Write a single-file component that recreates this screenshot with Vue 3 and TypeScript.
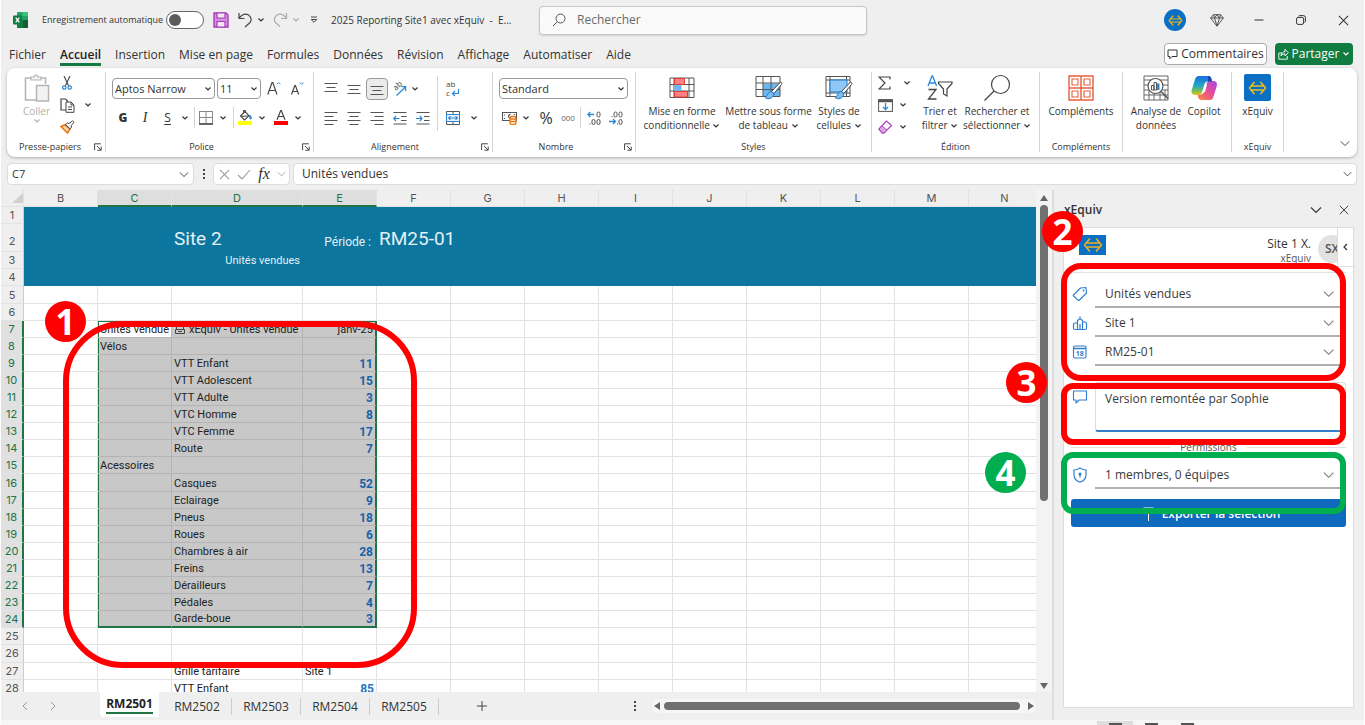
<script setup lang="ts">
import { ref } from 'vue'

interface SheetRow {
  n: number
  c?: string
  d?: string
  e?: string
  f?: string
}

const tabs = ['Fichier', 'Accueil', 'Insertion', 'Mise en page', 'Formules', 'Données', 'Révision', 'Affichage', 'Automatiser', 'Aide']
const columns = ['B', 'C', 'D', 'E', 'F', 'G', 'H', 'I', 'J', 'K', 'L', 'M', 'N']
const trailing = ['G', 'H', 'I', 'J', 'K', 'L', 'M', 'N']
const sheets = ['RM2501', 'RM2502', 'RM2503', 'RM2504', 'RM2505']

const rows: SheetRow[] = [
  { n: 1 },
  { n: 2, d: 'Site 2', e: 'Période :', f: 'RM25-01' },
  { n: 3, d: 'Unités vendues' },
  { n: 4 },
  { n: 5 },
  { n: 6 },
  { n: 7, c: 'Unités vendue', d: 'xEquiv - Unités vendue', e: 'janv-25' },
  { n: 8, c: 'Vélos' },
  { n: 9, d: 'VTT Enfant', e: '11' },
  { n: 10, d: 'VTT Adolescent', e: '15' },
  { n: 11, d: 'VTT Adulte', e: '3' },
  { n: 12, d: 'VTC Homme', e: '8' },
  { n: 13, d: 'VTC Femme', e: '17' },
  { n: 14, d: 'Route', e: '7' },
  { n: 15, c: 'Acessoires' },
  { n: 16, d: 'Casques', e: '52' },
  { n: 17, d: 'Eclairage', e: '9' },
  { n: 18, d: 'Pneus', e: '18' },
  { n: 19, d: 'Roues', e: '6' },
  { n: 20, d: 'Chambres à air', e: '28' },
  { n: 21, d: 'Freins', e: '13' },
  { n: 22, d: 'Dérailleurs', e: '7' },
  { n: 23, d: 'Pédales', e: '4' },
  { n: 24, d: 'Garde-boue', e: '3' },
  { n: 25 },
  { n: 26 },
  { n: 27, d: 'Grille tarifaire', e: 'Site 1' },
  { n: 28, d: 'VTT Enfant', e: '85' },
]

const isSelected = (n: number): boolean => n >= 7 && n <= 24
const rowClass = (n: number) => ({
  band: n <= 4,
  'band-title': n === 2,
  'band-sub': n === 3,
  sel: isSelected(n),
  first: n === 7,
  last: n === 24,
})
const isNumber = (v?: string): boolean => !!v && /^\d+$/.test(v)

const activeTab = ref('Accueil')
const activeSheet = ref('RM2501')
const comment = ref('Version remontée par Sophie')
const autosave = ref(false)
</script>

<template>
  <div class="app">
    <svg class="defs" aria-hidden="true">
      <symbol id="chev" viewBox="0 0 8 6"><path d="M1.500 1.500 4 4l2.500-2.500" fill="none" stroke="currentColor" stroke-width="1.200" /></symbol>
      <symbol id="chev-lg" viewBox="0 0 12 8"><path d="M1 1.500 6 6.500l5-5" fill="none" stroke="currentColor" stroke-width="1.100" /></symbol>
      <symbol id="launch" viewBox="0 0 8 8"><path d="M.6 7V.8h6.200M3 3l4 4M7.200 3.600v3.600H3.400" fill="none" stroke="#444" stroke-width="1" /></symbol>
      <symbol id="cross" viewBox="0 0 12 12"><path d="m1 1 10 10M11 1 1 11" fill="none" stroke="currentColor" stroke-width="1.100" /></symbol>
      <symbol id="arrows" viewBox="0 0 20 14"><path d="M6.500 1 1.500 7l5 6M13.500 1l5 6-5 6M3.500 5h13M3.500 9h13" fill="none" stroke="currentColor" stroke-width="1.600" stroke-linejoin="round" stroke-linecap="round" /></symbol>
    </svg>

    <header class="titlebar">
      <div class="title-left">
        <svg class="excel" width="15" height="16" viewBox="0 0 15 16">
          <rect x="4" y="0" width="11" height="16" rx="1" fill="#21a366" />
          <path d="M9.500 0H14a1 1 0 0 1 1 1v3H9.500z" fill="#33c481" /><path d="M9.500 8H15v7a1 1 0 0 1-1 1H9.500z" fill="#185c37" /><path d="M4 8h5.500v8H5a1 1 0 0 1-1-1z" fill="#107c41" />
          <rect x="0" y="3.500" width="9" height="9" rx="1" fill="#107c41" /><path d="m2.700 5.700 3.600 4.600M6.300 5.700l-3.600 4.600" stroke="#fff" stroke-width="1.300" />
        </svg>
        <label class="auto" for="autosave">Enregistrement automatique</label>
        <input id="autosave" v-model="autosave" class="switch" type="checkbox" role="switch" />
        <button class="ic save" aria-label="Enregistrer">
          <svg width="16" height="16" viewBox="0 0 16 16"><path d="M1 1h12l2 2v12H1z" fill="#d58fe0" stroke="#a83dba" stroke-width="1.400" /><path d="M4 1h8v5H4zM4 9.500h8V15H4z" fill="#f6e6f8" stroke="#a83dba" stroke-width="1.200" /></svg>
        </button>
        <button class="ic undo" aria-label="Annuler">
          <svg width="15" height="16" viewBox="0 0 15 16"><path d="M1 1v5.500h5.500M1 6.500C3.500 3 7 1 10.500 3c3 2 3.500 5.500 1 8L7 15" fill="none" stroke="#444" stroke-width="1.200" /></svg>
          <svg class="chev"><use href="#chev" /></svg>
        </button>
        <button class="ic redo" aria-label="Rétablir">
          <svg width="15" height="16" viewBox="0 0 15 16"><path d="M13.500 1v5.500H8M13.500 6.500C11 3 7.500 1 4 3c-3 2-3.500 5.500-1 8l4 3.500" fill="none" stroke="#aaa" stroke-width="1.200" /></svg>
          <svg class="chev"><use href="#chev" /></svg>
        </button>
        <button class="ic custom" aria-label="Personnaliser la barre">
          <svg width="8" height="8" viewBox="0 0 8 8"><path d="M1 1h6M1.200 3.500h5.600L4 6.300z" fill="none" stroke="#444" stroke-width="1" /></svg>
        </button>
        <span class="doc">2025 Reporting Site1 avec xEquiv&nbsp; -&nbsp; E...</span>
      </div>
      <label class="search">
        <svg width="14" height="14" viewBox="0 0 14 14"><circle cx="8.500" cy="5.500" r="4.500" fill="none" stroke="#555" /><path d="M5.200 8.800 1 13" stroke="#555" /></svg>
        <input type="text" placeholder="Rechercher" aria-label="Rechercher" />
      </label>
      <div class="window">
        <button class="avatar" aria-label="Compte"><svg width="15" height="11"><use href="#arrows" /></svg></button>
        <button class="ic" aria-label="Premium"><svg width="14" height="13" viewBox="0 0 14 13"><path d="M3.500.7h7L13.400 4 7 12.200.6 4zM.6 4h12.800M4.500 4 7 12l2.500-8M3.500.7 4.500 4 7 .7 9.500 4l1-3.300" fill="none" stroke="#444" stroke-width=".9" stroke-linejoin="round" /></svg></button>
        <button class="ic" aria-label="Réduire"><svg width="10" height="10" viewBox="0 0 10 10"><path d="M.5 5h9" stroke="#333" /></svg></button>
        <button class="ic" aria-label="Restaurer"><svg width="10" height="10" viewBox="0 0 10 10"><rect x=".6" y="2.400" width="7" height="7" rx="1.500" fill="none" stroke="#333" /><path d="M2.500 1.200C3 .6 3.500.6 4 .6h3.400a2 2 0 0 1 2 2V6c0 .6 0 1-.7 1.500" fill="none" stroke="#333" /></svg></button>
        <button class="ic" aria-label="Fermer"><svg width="11" height="11"><use href="#cross" /></svg></button>
      </div>
    </header>

    <div class="tabbar">
      <nav class="tabs">
        <button v-for="t in tabs" :key="t" class="tab" :class="{ on: t === activeTab }" @click="activeTab = t">{{ t }}</button>
      </nav>
      <button class="comments">
        <svg width="11" height="11" viewBox="0 0 11 11"><path d="M1 1h9v6.500H5L2.800 9.800V7.500H1z" fill="none" stroke="#333" /></svg>Commentaires
      </button>
      <button class="share">
        <svg width="11" height="12" viewBox="0 0 11 12"><path d="M4 5H.8v6.200h8.500V8M3 8c.3-3 2-4.300 4-4.300V1.300l3.300 3.400L7 8V5.800C5.500 5.800 4.200 6.300 3 8z" fill="none" stroke="#fff" stroke-width=".9" /></svg>Partager
        <svg class="chev"><use href="#chev" /></svg>
      </button>
    </div>

    <section class="ribbon">
      <div class="group clip">
        <div class="body">
          <button class="big paste" disabled>
            <svg width="26" height="28" viewBox="0 0 26 28"><path d="M7 4H1.500v22H12M17 4h4.500v6" fill="none" stroke="#b5b5b5" stroke-width="1.600" /><path d="M7 6V3h3c0-2.500 4-2.500 4 0h3v3z" fill="#f3f3f3" stroke="#b5b5b5" stroke-width="1.200" /><rect x="12.500" y="11.500" width="12" height="15.500" fill="#f3f3f3" stroke="#b5b5b5" stroke-width="1.500" /></svg>
            <span>Coller</span><svg class="chev"><use href="#chev" /></svg>
          </button>
          <div class="stack">
            <button aria-label="Couper"><svg width="10" height="14" viewBox="0 0 10 14"><path d="m2 0 4.700 10M8 0 3.300 10" stroke="#444" stroke-width="1.100" /><circle cx="2.300" cy="11.500" r="1.700" fill="none" stroke="#2b88d8" stroke-width="1.200" /><circle cx="7.700" cy="11.500" r="1.700" fill="none" stroke="#2b88d8" stroke-width="1.200" /></svg></button>
            <button aria-label="Copier"><svg width="15" height="15" viewBox="0 0 15 15"><path d="M6 12H1V1h4.500L8 3.500" fill="none" stroke="#444" stroke-width="1.200" /><path d="M6 4h5l3 3v7.300H6zM11 4v3h3M8 9h4M8 11.500h4" fill="#fff" stroke="#444" /></svg></button>
            <button aria-label="Reproduire la mise en forme"><svg width="15" height="14" viewBox="0 0 15 14"><path d="M1 6.500 7.500 13l2.500-4L5 4.800z" fill="#fbd9b4" stroke="#e8760c" stroke-width="1.600" /><path d="m5.500 4.500 4.500 4.300 1.700-1.800-.7-1.200 3-3.500-1.500-1.400-3.700 2.700L7.500 3z" fill="#fff" stroke="#444" /></svg></button>
            <svg class="chev"><use href="#chev" /></svg>
          </div>
        </div>
        <footer>Presse-papiers<svg class="launch"><use href="#launch" /></svg></footer>
      </div>

      <div class="group font">
        <div class="body col">
          <div class="line">
            <label class="combo family"><select aria-label="Police"><option>Aptos Narrow</option></select><svg class="chev"><use href="#chev" /></svg></label>
            <label class="combo size"><select aria-label="Taille"><option>11</option></select><svg class="chev"><use href="#chev" /></svg></label>
            <button class="grow" aria-label="Agrandir"><svg width="14" height="15" viewBox="0 0 14 15"><path d="m.8 13.500 4.200-12h.8l4.200 12M2.200 9.500h6.400" fill="none" stroke="#444" stroke-width="1.200" /><path d="m9.800 3.300 1.800-1.800 1.800 1.800" fill="none" stroke="#2b88d8" /></svg></button>
            <button class="grow" aria-label="Réduire la taille"><svg width="14" height="15" viewBox="0 0 14 15"><path d="m1.500 13.500 3.300-9h.6l3.300 9M2.600 10.500h5" fill="none" stroke="#444" stroke-width="1.200" /><path d="m9.800 1.500 1.800 1.800 1.800-1.800" fill="none" stroke="#2b88d8" /></svg></button>
          </div>
          <div class="line font-row">
            <button class="bold">G</button><button class="ital">I</button><button class="under">S</button>
            <svg class="chev"><use href="#chev" /></svg><i class="vr" />
            <button aria-label="Bordures"><svg width="14" height="14" viewBox="0 0 14 14"><path d="M.5 0v12M13.500 0v12M7 0v12M0 .5h14M0 6.500h14" fill="none" stroke="#888" /><path d="M0 13h14" stroke="#333" stroke-width="1.500" /></svg></button>
            <svg class="chev"><use href="#chev" /></svg><i class="vr" />
            <button aria-label="Remplissage"><svg width="14" height="15" viewBox="0 0 14 15"><rect y="11" width="14" height="4" fill="#ffff00" /><path d="m2.500 6 4.500-4.500 4 4.300L6.500 10z" fill="#fff" stroke="#444" stroke-width="1.100" /><path d="m3 6.300 7.500-.3M5.500 3V.5h2V3" fill="none" stroke="#444" /><path d="M12 5c2 3 1.500 4 .5 4s-1-2-.5-4z" fill="#2b88d8" stroke="#2b88d8" /></svg></button>
            <svg class="chev"><use href="#chev" /></svg>
            <button aria-label="Couleur de police"><svg width="14" height="15" viewBox="0 0 14 15"><rect y="11" width="14" height="4" fill="#ff0000" /><path d="M3 9.700 6.700.6h.6L11 9.700M4.300 6.500h5.400" fill="none" stroke="#444" stroke-width="1.200" /></svg></button>
            <svg class="chev"><use href="#chev" /></svg>
          </div>
        </div>
        <footer>Police<svg class="launch"><use href="#launch" /></svg></footer>
      </div>

      <div class="group align">
        <div class="body align-grid">
          <button aria-label="Haut"><svg width="14" height="14" viewBox="0 0 14 14"><path d="M.5 1.500h13M2.500 5.500h9M.5 9.500h13" stroke="#555" stroke-width="1.100" /></svg></button>
          <button aria-label="Milieu"><svg width="14" height="14" viewBox="0 0 14 14"><path d="M.5 3.500h13M2.500 7.500h9M.5 11.500h13" stroke="#555" stroke-width="1.100" /></svg></button>
          <button class="pressed" aria-label="Bas"><svg width="14" height="14" viewBox="0 0 14 14"><path d="M.5 4.500h13M2.500 8.500h9M.5 12.500h13" stroke="#555" stroke-width="1.100" /></svg></button>
          <button aria-label="Orientation"><svg class="loose" width="15" height="14" viewBox="0 0 15 14"><text x="0" y="0" transform="translate(4 9) rotate(-45)" font-size="8" font-family="Open Sans, sans-serif" fill="#444">ab</text><path d="M4.500 13.500 13.500 5M9.500 4.700h4.200v4.200" fill="none" stroke="#2b88d8" stroke-width="1.200" /></svg></button>
          <svg class="chev start"><use href="#chev" /></svg>
          <i class="vr tall" />
          <button aria-label="Renvoyer à la ligne"><svg class="loose" width="14" height="18" viewBox="0 0 14 18"><text x="0" y="7" font-size="8" font-family="Open Sans, sans-serif" fill="#444">ab</text><text x="0" y="16" font-size="8" font-family="Open Sans, sans-serif" fill="#444">c</text><path d="M12.500 9v4.500H6.500M9 11l-2.500 2.500L9 16" fill="none" stroke="#2b88d8" stroke-width="1.200" /></svg></button>
          <span />
          <button aria-label="Gauche"><svg width="14" height="14" viewBox="0 0 14 14"><path d="M.5 1.500h13M.5 5.500h9M.5 9.500h13M.5 13.500h9" stroke="#555" stroke-width="1.100" /></svg></button>
          <button aria-label="Centre"><svg width="14" height="14" viewBox="0 0 14 14"><path d="M.5 1.500h13M2.500 5.500h9M.5 9.500h13M2.500 13.500h9" stroke="#555" stroke-width="1.100" /></svg></button>
          <button aria-label="Droite"><svg width="14" height="14" viewBox="0 0 14 14"><path d="M.5 1.500h13M4.500 5.500h9M.5 9.500h13M4.500 13.500h9" stroke="#555" stroke-width="1.100" /></svg></button>
          <button aria-label="Diminuer le retrait"><svg width="14" height="14" viewBox="0 0 14 14"><path d="M.5 1.500h13M8 5.500h5.500M8 9.500h5.500M.5 13h13" stroke="#555" stroke-width="1.100" /><path d="M6.500 7.500h-6M3 5 .8 7.500 3 10" fill="none" stroke="#2b88d8" stroke-width="1.200" /></svg></button>
          <button aria-label="Augmenter le retrait"><svg width="14" height="14" viewBox="0 0 14 14"><path d="M.5 1.500h13M8 5.500h5.500M8 9.500h5.500M.5 13h13" stroke="#555" stroke-width="1.100" /><path d="M0 7.500h6M3.800 5 6 7.500 3.800 10" fill="none" stroke="#2b88d8" stroke-width="1.200" /></svg></button>
          <button aria-label="Fusionner"><svg width="14" height="14" viewBox="0 0 14 14"><path d="M.5.5h13v13H.5zM7 .5v3M7 10.500v3" fill="#fff" stroke="#555" /><rect x=".5" y="3.500" width="13" height="7" fill="#e8f3fc" stroke="#2b88d8" /><path d="M2.500 7h9M4.500 5.200 2.600 7l1.900 1.800M9.500 5.200 11.400 7 9.500 8.800" fill="none" stroke="#2b88d8" stroke-width="1.100" /></svg></button>
          <svg class="chev"><use href="#chev" /></svg>
        </div>
        <footer>Alignement<svg class="launch"><use href="#launch" /></svg></footer>
      </div>

      <div class="group number">
        <div class="body col">
          <div class="line"><label class="combo format"><select aria-label="Format"><option>Standard</option></select><svg class="chev"><use href="#chev" /></svg></label></div>
          <div class="line number-row">
            <button aria-label="Comptabilité"><svg width="15" height="14" viewBox="0 0 15 14"><rect x=".5" y="1.500" width="14" height="8" fill="#fff" stroke="#555" /><path d="M2.500 3.500v1M2.500 7v1M12.500 3v1M8.500 3.500c-2.500-.5-2.500 4 0 3.500" fill="none" stroke="#555" stroke-width="1.200" /><rect x="8" y="5.500" width="6" height="8" rx="2" fill="#fff" stroke="#e8760c" stroke-width="1.300" /><path d="M8 8h6M8 10.500h6" stroke="#e8760c" stroke-width="1.300" /></svg></button>
            <svg class="chev"><use href="#chev" /></svg>
            <button class="pct">%</button><button class="zeros">000</button><i class="vr" />
            <button class="dec" aria-label="Ajouter une décimale"><svg width="14" height="14" viewBox="0 0 14 14"><path d="M7 3.500H.8M3.300 1 .8 3.500 3.300 6" fill="none" stroke="#2b88d8" stroke-width="1.300" /><rect x="10" y="1" width="3" height="5" rx="1.500" fill="none" stroke="#555" /><rect x="5" y="8.500" width="3" height="5" rx="1.500" fill="none" stroke="#555" /><rect x="10" y="8.500" width="3" height="5" rx="1.500" fill="none" stroke="#555" /><path d="M2.500 13h1" stroke="#555" /></svg></button>
            <button class="dec" aria-label="Réduire les décimales"><svg width="14" height="14" viewBox="0 0 14 14"><path d="M0 10.500h6.500M4 8l2.500 2.500L4 13" fill="none" stroke="#2b88d8" stroke-width="1.300" /><rect x="5" y="1" width="3" height="5" rx="1.500" fill="none" stroke="#555" /><rect x="10" y="1" width="3" height="5" rx="1.500" fill="none" stroke="#555" /><rect x="10" y="8.500" width="3" height="5" rx="1.500" fill="none" stroke="#555" /><path d="M2.500 5.500h1M8 13h1" stroke="#555" /></svg></button>
          </div>
        </div>
        <footer>Nombre<svg class="launch"><use href="#launch" /></svg></footer>
      </div>

      <div class="group styles">
        <div class="body">
          <button class="big w84">
            <svg width="26" height="22" viewBox="0 0 26 22"><path d="M1 1h24v19.500H1zM1 7.500h24M1 14h24M5 1v19.500M20 1v19.500" fill="#fff" stroke="#555" /><path d="M5.500 1.500h10v6h-10zM5.500 14.500h13v5.500h-13z" fill="#ff8080" stroke="#e03c3c" /><path d="M5.500 8h7v6h-7z" fill="#6ab7f2" /></svg>
            <span>Mise en forme<br />conditionnelle <svg class="chev"><use href="#chev" /></svg></span>
          </button>
          <button class="big w89">
            <svg width="28" height="25" viewBox="0 0 28 25"><rect x="8" y="8" width="17" height="13" fill="#6ab7f2" /><path d="M1 1h24v20H1zM1 7.500h24M1 14h24M8 1v20M16 1v20" fill="none" stroke="#555" /><path d="M25.500 6.500c1.500.5 1.500 1.500 1 2.500L19 18l-2.500-2z" fill="#fff" stroke="#444" /><path d="M16 16c-3 0-3 4-6 6 3 2.500 8 1 9-3.500z" fill="#79bdf3" stroke="#1e78c8" /></svg>
            <span>Mettre sous forme<br />de tableau <svg class="chev"><use href="#chev" /></svg></span>
          </button>
          <button class="big w52">
            <svg width="28" height="25" viewBox="0 0 28 25"><path d="M1 1h24v20H1zM1 4.500h24M1 17.500h24M5 1v20M21.500 1v20" fill="none" stroke="#555" /><rect x="5" y="4.500" width="17" height="12" fill="#8fc8f7" stroke="#1e78c8" /><path d="M25.500 6.500c1.500.5 1.500 1.500 1 2.500L19 18l-2.500-2z" fill="#fff" stroke="#444" /><path d="M16 16c-3 0-3 4-6 6 3 2.500 8 1 9-3.500z" fill="#79bdf3" stroke="#1e78c8" /></svg>
            <span>Styles de<br />cellules <svg class="chev"><use href="#chev" /></svg></span>
          </button>
        </div>
        <footer>Styles</footer>
      </div>

      <div class="group edit">
        <div class="body">
          <div class="edit-col">
            <button class="wide" aria-label="Somme"><svg width="13" height="14" viewBox="0 0 13 14"><path d="M12 3.500V1H1l6 6-6 6h11v-2.500" fill="none" stroke="#444" stroke-width="1.200" /></svg><svg class="chev"><use href="#chev" /></svg></button>
            <button aria-label="Recopier"><svg width="15" height="13" viewBox="0 0 15 13"><rect x=".6" y=".6" width="13.800" height="11.800" fill="#fff" stroke="#555" /><path d="M.5 2h14" stroke="#555" stroke-width="2.500" /><path d="M7.500 4v6.500M5 8l2.500 2.500L10 8" fill="none" stroke="#2b88d8" stroke-width="1.300" /></svg><svg class="chev"><use href="#chev" /></svg></button>
            <button aria-label="Effacer"><svg width="15" height="14" viewBox="0 0 15 14"><path d="m1 9 7.500-8 5 4.500L6 13H4z" fill="#fff" stroke="#a83dba" stroke-width="1.200" /><path d="m1 9 3-3.300 5 4.600L6 13H4z" fill="#d9a6e2" stroke="#a83dba" /></svg><svg class="chev"><use href="#chev" /></svg></button>
          </div>
          <button class="big w40">
            <svg width="26" height="26" viewBox="0 0 26 26"><path d="m1 11 4-10h.6l4 10M2.300 8h6" fill="none" stroke="#2b88d8" stroke-width="1.300" /><path d="M1.500 14.500H9L1.500 24h8" fill="none" stroke="#444" stroke-width="1.300" /><path d="M11.500 7h13.500v1.500l-5 5.500v7l-3.500-2v-5l-5-5.500z" fill="none" stroke="#444" stroke-width="1.200" /></svg>
            <span>Trier et<br />filtrer <svg class="chev"><use href="#chev" /></svg></span>
          </button>
          <button class="big w74">
            <svg width="28" height="28" viewBox="0 0 28 28"><circle cx="17.500" cy="10.500" r="9" fill="none" stroke="#444" stroke-width="1.200" /><path d="M11 17 1.500 26.500" stroke="#444" stroke-width="1.300" /></svg>
            <span>Rechercher et<br />sélectionner <svg class="chev"><use href="#chev" /></svg></span>
          </button>
        </div>
        <footer>Édition</footer>
      </div>

      <div class="group addins">
        <div class="body">
          <button class="big">
            <svg width="26" height="26" viewBox="0 0 26 26"><path d="M1 1h24v24H1zM1 13h24M13 1v24" fill="none" stroke="#e2613c" stroke-width="1.400" /><path d="M4 4h6v6H4zM16 4h6v6h-6zM4 16h6v6H4zM16 16h6v6h-6z" fill="#fff" stroke="#e2613c" stroke-width="1.100" /></svg>
            <span>Compléments</span>
          </button>
        </div>
        <footer>Compléments</footer>
      </div>

      <div class="group analyse">
        <div class="body">
          <button class="big w54">
            <svg width="26" height="26" viewBox="0 0 26 26"><path d="M1 1h24v24H1zM1 5h24M1 10h24M1 15h24M1 20h24M6 15v10M11 15v10M17 15v10M22 15v10" fill="#fff" stroke="#666" /><circle cx="12.500" cy="11" r="7.500" fill="#fff" stroke="#555" stroke-width="1.200" /><path d="M8.500 10.500h2.500V15H8.500zM11 7.500h2.500V15H11z" fill="#fff" stroke="#555" /><path d="M14 8.500h2.500V15H14z" fill="#2b88d8" /><path d="m18 16.500 7 7" stroke="#555" stroke-width="1.600" /></svg>
            <span>Analyse de<br />données</span>
          </button>
          <button class="big w42">
            <svg width="27" height="26" viewBox="0 0 27 26">
              <defs>
                <linearGradient id="cpa" x1="0" y1="0" x2="0" y2="1"><stop offset="0" stop-color="#1b6fe0" /><stop offset=".5" stop-color="#21a5c9" /><stop offset=".8" stop-color="#7cc04b" /><stop offset="1" stop-color="#f2c51d" /></linearGradient>
                <linearGradient id="cpb" x1="1" y1="0" x2="0" y2="1"><stop offset="0" stop-color="#a24be8" /><stop offset=".5" stop-color="#ea4d94" /><stop offset="1" stop-color="#fb8d35" /></linearGradient>
              </defs>
              <path d="M8 1h9c2.500 0 3 1.500 3.500 3.500l.5 2h-4c-2 0-3 1-3.500 2.500L11 17c-.6 2-1.500 3-3.500 3H4c-3.500 0-4-3-3-6L4 4.500C4.700 2.200 5.500 1 8 1z" fill="url(#cpa)" />
              <path d="M19 25h-8.500c-2.500 0-3-1.500-3.500-3.500L6.500 19.500h3c2 0 3-1 3.500-2.500l2.500-8c.6-2 1.500-3 3.500-3h3.500c3.500 0 4 3 3 6l-3 9.500c-.7 2.300-1 3.500-3.500 3.500z" fill="url(#cpb)" />
              <path d="m14 9.500-2 7.500h2l2-7.500z" fill="#fff" /><path d="M17 1c2.500 0 3 1.500 3.500 3.500l.5 2h-4z" fill="#1b44b5" />
            </svg>
            <span>Copilot</span>
          </button>
        </div>
      </div>

      <div class="group xeq">
        <div class="body">
          <button class="big"><i class="brand"><svg width="19" height="14"><use href="#arrows" /></svg></i><span>xEquiv</span></button>
        </div>
        <footer>xEquiv</footer>
      </div>
      <button class="collapse" aria-label="Réduire le ruban"><svg width="10" height="7"><use href="#chev-lg" /></svg></button>
    </section>

    <div class="formula">
      <label class="namebox"><input type="text" value="C7" aria-label="Zone Nom" /><svg width="10" height="7"><use href="#chev-lg" /></svg></label>
      <i class="dots" />
      <div class="fx">
        <button class="dim" aria-label="Annuler la saisie"><svg width="11" height="11"><use href="#cross" /></svg></button>
        <button class="dim" aria-label="Valider"><svg width="14" height="11" viewBox="0 0 14 11"><path d="m1 6 4 4 8-9" fill="none" stroke="#999" stroke-width="1.100" /></svg></button>
        <button class="fxb">fx</button>
        <svg class="dim" width="9" height="6"><use href="#chev-lg" /></svg>
      </div>
      <label class="fbar"><input type="text" value="Unités vendues" aria-label="Barre de formule" /><svg width="9" height="6"><use href="#chev-lg" /></svg></label>
    </div>

    <main class="work">
      <section class="sheet">
        <div class="grid-wrap">
          <div class="grid">
            <table>
              <colgroup>
                <col class="cw-head" /><col v-for="c in columns" :key="c" :class="{ 'cw-d': c === 'D', 'cw-last': c === 'N', cw: c !== 'D' && c !== 'N' }" />
              </colgroup>
              <thead>
                <tr>
                  <th class="corner"><svg width="11" height="10" viewBox="0 0 11 10"><path d="M11 0v10H0z" fill="#d0d0d0" /></svg></th>
                  <th v-for="c in columns" :key="c" scope="col" :class="{ hot: 'CDE'.includes(c) }">{{ c }}</th>
                </tr>
              </thead>
              <tbody>
                <tr v-for="r in rows" :key="r.n" :class="rowClass(r.n)">
                  <th scope="row">{{ r.n }}</th>
                  <td />
                  <td class="c">{{ r.c }}</td>
                  <td class="d"><svg v-if="r.n === 7" class="db" width="10" height="9" viewBox="0 0 10 9"><path d="M1.500 4V.5h7V4M.5 4.500h9v4h-9zM3 6.500h4" fill="none" stroke="#444" /></svg>{{ r.d }}</td>
                  <td class="e" :class="{ num: isNumber(r.e), pale: r.n === 28, left: r.n === 27 }">{{ r.e }}</td>
                  <td>{{ r.f }}</td>
                  <td v-for="t in trailing" :key="t" />
                </tr>
              </tbody>
            </table>
          </div>
          <div class="vscroll"><i class="tri up" /><i class="thumb" /><i class="tri down" /></div>
        </div>
        <div class="sheetbar">
          <div class="arrows">
            <button aria-label="Feuille précédente"><svg width="6" height="10" viewBox="0 0 6 10"><path d="M5 1 1 5l4 4" fill="none" stroke="#999" /></svg></button>
            <button aria-label="Feuille suivante"><svg width="6" height="10" viewBox="0 0 6 10"><path d="m1 1 4 4-4 4" fill="none" stroke="#999" /></svg></button>
          </div>
          <button v-for="s in sheets" :key="s" class="stab" :class="{ on: s === activeSheet }" @click="activeSheet = s"><span>{{ s }}</span></button>
          <button class="plus" aria-label="Nouvelle feuille"><svg width="10" height="10" viewBox="0 0 10 10"><path d="M5 0v10M0 5h10" stroke="#444" /></svg></button>
          <i class="dots push" />
          <div class="hscroll"><i class="tri lf" /><i class="hthumb" /><i class="tri rt" /></div>
        </div>
        <i class="mark area" />
        <b class="badge b1">1</b>
      </section>

      <aside class="pane">
        <div class="pane-head">
          <h2>xEquiv</h2>
          <button aria-label="Options du volet"><svg width="12" height="8"><use href="#chev-lg" /></svg></button>
          <button aria-label="Fermer le volet"><svg width="10" height="10"><use href="#cross" /></svg></button>
        </div>
        <div class="card">
          <div class="who">
            <i class="logo"><svg width="20" height="14"><use href="#arrows" /></svg></i>
            <p>Site 1 X.<small>xEquiv</small></p>
            <span class="sx">SX</span>
            <button class="fold" aria-label="Replier"><svg width="5" height="8" viewBox="0 0 5 8"><path d="M4 1 1 4l3 3" fill="none" stroke="#333" stroke-width="1.200" /></svg></button>
          </div>
          <form class="form" @submit.prevent>
            <div class="field">
              <svg width="16" height="16" viewBox="0 0 16 16"><path d="m1.500 9 7-7 5.500-.5L14.500 7l-7 7c-.5.5-1 .5-1.500 0L1.500 10c-.4-.4-.4-.6 0-1z" fill="none" stroke="#2f7fcb" stroke-width="1.100" stroke-linejoin="round" /><circle cx="11.500" cy="4.500" r="1" fill="#2f7fcb" /></svg>
              <label><select aria-label="Table"><option>Unités vendues</option></select><svg width="12" height="8"><use href="#chev-lg" /></svg></label>
            </div>
            <div class="field">
              <svg width="16" height="16" viewBox="0 0 16 16"><path d="M5.500 14.500H3A1.500 1.500 0 0 1 1.500 13V9.500A1.500 1.500 0 0 1 3 8h2.500M5.500 14.500v-9L8 3.500l2.500 2v9zM10.500 14.500H13a1.500 1.500 0 0 0 1.500-1.500V8.500A1.500 1.500 0 0 0 13 7h-2.500M8 3.500V1.500M8 14.500V9" fill="none" stroke="#2f7fcb" stroke-width="1.200" /></svg>
              <label><select aria-label="Site"><option>Site 1</option></select><svg width="12" height="8"><use href="#chev-lg" /></svg></label>
            </div>
            <div class="field">
              <svg width="16" height="16" viewBox="0 0 16 16"><rect x="1.500" y="2" width="12.500" height="12" rx="1.500" fill="none" stroke="#2f7fcb" stroke-width="1.100" /><path d="M1.500 4.500H14" stroke="#2f7fcb" stroke-width="1.500" /><text x="7.800" y="12.200" text-anchor="middle" font-size="7" font-weight="700" font-family="Open Sans, sans-serif" fill="#2f7fcb">18</text></svg>
              <label><select aria-label="Période"><option>RM25-01</option></select><svg width="12" height="8"><use href="#chev-lg" /></svg></label>
            </div>
            <div class="field note">
              <svg width="16" height="16" viewBox="0 0 16 16"><path d="M1.500 2h13v9H7l-3 3v-3H1.500z" fill="none" stroke="#2f7fcb" stroke-width="1.100" stroke-linejoin="round" /></svg>
              <textarea v-model="comment" aria-label="Commentaire" />
            </div>
            <div class="perm"><span>Permissions</span></div>
            <div class="field">
              <svg width="16" height="16" viewBox="0 0 16 16"><path d="M8 1c2 1.500 4 2 6 2v5c0 3.500-2.500 6-6 7.300C4.500 14 2 11.500 2 8V3c2 0 4-.5 6-2z" fill="none" stroke="#2f7fcb" stroke-width="1.200" /><circle cx="8" cy="7" r="1.500" fill="#2f7fcb" /><path d="M8 7v3.500" stroke="#2f7fcb" stroke-width="1.200" /></svg>
              <label><select aria-label="Permissions"><option>1 membres, 0 équipes</option></select><svg width="12" height="8"><use href="#chev-lg" /></svg></label>
            </div>
            <button class="export" type="submit"><svg width="11" height="15" viewBox="0 0 11 15"><path d="M.5 1h10M5.500 1v13" fill="none" stroke="#fff" /></svg>Exporter la sélection</button>
          </form>
        </div>
        <i class="mark m2" /><i class="mark m3" /><i class="mark m4" />
        <b class="badge b2">2</b><b class="badge b3">3</b><b class="badge b4">4</b>
      </aside>
    </main>

    <footer class="status"><i class="view on" /><i class="view" /><i class="view" /></footer>
  </div>
</template>

<style>
html, body { background: #fff; overflow: hidden; }
</style>

<style scoped>
* { box-sizing: border-box; }
.app { height: 100vh; display: flex; flex-direction: column; background: #efefef; border: solid #fff; border-width: 0 1px; font: 12px/14px "Open Sans", "Noto Sans", sans-serif; color: #333; white-space: nowrap; overflow: hidden; }
.defs { display: none; }
.loose { overflow: visible; }
button, input, select, textarea { font: inherit; color: inherit; background: none; border: 0; padding: 0; margin: 0; outline: 0; }
button { display: inline-flex; align-items: center; justify-content: center; }
select { appearance: none; width: 100%; height: 100%; }
.chev { width: 8px; height: 6px; color: #333; flex: none; }

.titlebar { height: 40px; flex: none; display: flex; align-items: center; }
.title-left { width: 538px; flex: none; display: flex; align-items: center; font-size: 10px; }
.excel { margin: 0 14px 0 12px; }
.auto { width: 124px; font-size: 9px; }
.switch { appearance: none; width: 38px; height: 18px; border: 1px solid #666; border-radius: 9px; background: #fff; display: flex; align-items: center; margin-right: 9px; }
.switch::before { content: ""; width: 12px; height: 12px; margin-left: 2px; border-radius: 50%; background: #5c5c5c; }
.save { margin-right: 9px; }
.undo, .redo { gap: 4px; margin-right: 8px; }
.redo .chev { color: #aaa; }
.custom { margin: 0 13px 0 2px; }
.search { width: 328px; height: 29px; display: flex; align-items: center; gap: 11px; padding-left: 12px; background: #fafafa; border: 1px solid #c8c8c8; border-radius: 4px; box-shadow: 0 1px 2px #0002; font-size: 12px; }
.search input { flex: 1; }
.search input::placeholder { color: #6a6a6a; opacity: 1; }
.window { margin-left: auto; display: flex; align-items: center; }
.window button { width: 42px; height: 24px; }
.window .avatar { width: 22px; height: 22px; margin-right: 10px; border-radius: 50%; background: #0b6fc4; color: #e8b923; }

.tabbar { height: 28px; flex: none; display: flex; align-items: center; padding: 0 11px 0 8px; }
.tabs { display: flex; gap: 14px; margin-right: auto; height: 26px; align-self: flex-start; }
.tab { border-bottom: 3px solid transparent; padding-top: 6px; }
.tab.on { font-weight: 600; border-bottom-color: #137a43; color: #222; }
.comments, .share { height: 22px; border-radius: 4px; gap: 3px; }
.comments { width: 103px; border: 1px solid #aaa; background: #fff; margin-right: 8px; }
.share { width: 78px; background: #107c41; color: #fff; }
.share .chev { color: #fff; }

.ribbon { height: 89px; flex: none; display: flex; margin: 0 7px 0 6px; background: #fff; border-radius: 8px; box-shadow: 0 1px 3px #0004; font-size: 10px; padding: 4px 0 5px; }
.group { flex: none; display: flex; flex-direction: column; border-right: 1px solid #d4d4d4; }
.group > footer { position: relative; height: 12px; text-align: center; font-size: 9px; line-height: 14px; color: #333; }
.launch { position: absolute; right: 3px; top: 3px; width: 8px; height: 8px; }
.body { flex: 1; display: flex; }
.big { flex-direction: column; justify-content: flex-start; align-self: flex-start; text-align: center; width: 100%; padding-top: 2px; }
.big > svg:first-child, .brand { height: 28px; flex: none; margin-bottom: 2px; }
.big .chev { display: inline-block; vertical-align: middle; }
.w84 { width: 84px; } .w89 { width: 89px; } .w52 { width: 52px; } .w40 { width: 40px; } .w74 { width: 74px; } .w54 { width: 54px; } .w42 { width: 42px; }
.clip { width: 99px; }
.clip > footer { padding-right: 12px; }
.paste { width: 33px; margin-left: 13px; color: #b0b0b0; }
.paste .chev { color: #b0b0b0; }
.stack { display: grid; grid-template: repeat(3, 22px) / 28px 14px; place-items: center; }
.stack button { grid-column: 1; }
.stack .chev { grid-area: 2 / 2; }
.font { width: 208px; }
.font .body, .number .body { padding-left: 6px; }
.font > footer, .align > footer, .number > footer { padding-right: 16px; }
.body.col { flex-direction: column; padding-top: 6px; }
.line { display: flex; height: 21px; gap: 2px; }
.col .line + .line { margin-top: 8px; }
.combo { display: flex; align-items: center; height: 21px; border: 1px solid #999; border-radius: 4px; background: #fff; padding: 0 2px; font-size: 11px; }
.family { width: 103px; } .size { width: 44px; } .format { width: 129px; }
.grow { width: 21px; }
.font-row { display: grid; gap: 0; grid-template-columns: 22px 22px 23px 12px 6px 18px 16px 4px 20px 14px 24px 10px; place-items: center; }
.vr { width: 1px; height: 21px; background: #d4d4d4; }
.bold { font-weight: 800; font-size: 12px; }
.ital { font: italic 14px "Liberation Serif", serif; }
.under { font-size: 12px; text-decoration: underline; text-underline-offset: 2px; }
.align { width: 179px; }
.align-grid { flex: none; display: grid; grid-template: 21px 21px / 23px 23px 23px 23px 23px 6px 26px 16px; row-gap: 8px; padding: 6px 0 0 5px; place-items: center; margin-bottom: auto; }
.pressed { width: 22px; height: 22px; background: #ebebeb; border: 1px solid #999; border-radius: 4px; }
.start { justify-self: start; }
.tall { grid-row: 1 / 3; grid-column: 6; height: 55px; }
.number { width: 143px; }
.number-row { display: grid; gap: 0; grid-template-columns: 20px 14px 26px 18px 7px 19px 25px; place-items: center; }
.pct { font-size: 16px; } .zeros { font-size: 8px; color: #666; }
.styles { width: 236px; } .styles .body { padding-left: 4px; }
.edit { width: 168px; } .edit .body { padding-left: 6px; }
.edit-col { width: 42px; display: flex; flex-direction: column; }
.edit-col button { height: 22px; justify-content: flex-start; gap: 6px; width: 36px; }
.edit-col .wide { gap: 12px; }
.addins { width: 83px; } .analyse { width: 109px; } .analyse .body { padding-left: 6px; }
.xeq { width: 52px; }
.brand { width: 27px; display: flex; align-items: center; justify-content: center; background: #0b6fc4; color: #f0c020; border-radius: 2px; height: 27px; margin-bottom: 3px; }
.collapse { margin: auto 7px 5px auto; }

.formula { height: 22px; flex: none; margin: 6px 7px 5px 6px; display: flex; align-items: center; }
.formula label, .fx { height: 22px; background: #fff; border: 1px solid #dcdcdc; border-radius: 4px; display: flex; align-items: center; }
.namebox { width: 187px; padding: 0 4px; font-size: 11px; }
.namebox input, .fbar input { flex: 1; min-width: 0; }
.dots { width: 2px; height: 10px; margin: 0 8px 0 9px; background: repeating-linear-gradient(#444 0 2px, transparent 2px 4px); }
.fx { width: 77px; padding: 0 3px 0 5px; justify-content: space-between; margin-right: 3px; }
.dim { color: #999; }
.fxb { font: italic 16px "Liberation Serif", serif; }
.fbar { flex: 1; padding: 0 4px 0 8px; }

.work { flex: 1; min-height: 0; display: flex; }
.sheet { position: relative; flex: 1; min-width: 0; display: flex; flex-direction: column; border-right: 2px solid #ddd; }
.grid-wrap { flex: 1; min-height: 0; display: flex; }
.grid { flex: 1; min-width: 0; overflow: hidden; background: #fff; }
table { table-layout: fixed; width: calc(100% + 5px); height: 101%; border-collapse: separate; border-spacing: 0; font: 11px/14px Roboto, "Liberation Sans", sans-serif; color: #222; }
.cw-head { width: 23px; } .cw { width: 74px; } .cw-d { width: 131px; }
tr { height: 17px; }
th, td { padding: 0 2px; border: solid #e2e2e2; border-width: 0 1px 1px 0; overflow: hidden; vertical-align: bottom; }
th { font-weight: 400; text-align: center; background: #efefef; color: #555; padding: 0; font-family: Inter, Roboto, sans-serif; font-size: 11px; vertical-align: middle; }
tbody th { border-right-color: #ccc; }
.corner { text-align: right; line-height: 8px; }
.hot { background: #dedede; color: #217346; border-bottom: 2px solid #217346; }
tr.sel th { background: #e0e0e0; color: #217346; border-right: 2px solid #217346; }
.band td { background: #0c769e; border-color: #0c769e; color: #e3f0f6; overflow: visible; }
.band-title { height: 28px; }
.band-title th { vertical-align: bottom; line-height: 20px; }
.band-title td { font-size: 19px; line-height: 24px; }
.band-title .e { font-size: 12px; padding-right: 5px; line-height: 18px; }
.band-sub .d { text-align: right; }
.e { text-align: right; }
.left { text-align: left; }
.num { font-weight: 700; font-size: 12px; color: #1a61a8; }
.pale { color: #1f78c8; }
.sel .c, .sel .d, .sel .e { background: #c8c8c8; border-color: #b4b4b4; }
.sel .c { box-shadow: inset 1px 0 #217346; }
.sel .e { border-right: 2px solid #217346; }
.first .c { box-shadow: inset 1px 1px #217346; }
.first .d, .first .e { box-shadow: inset 0 1px #217346; }
tr.first td.c { background: #fff; }
.last .c, .last .d, .last .e { border-bottom: 2px solid #217346; }
.db { margin: 0 4px 0 1px; vertical-align: -1px; }
.vscroll { width: 16px; flex: none; background: #f3f3f3; display: flex; flex-direction: column; align-items: center; padding: 5px 0 3px; }
.tri { border: 4px solid transparent; flex: none; }
.up { border-top: 0; border-bottom: 6px solid #666; }
.down { border-bottom: 0; border-top: 6px solid #666; margin-top: auto; }
.thumb { width: 8px; height: 60%; margin-top: 4px; border-radius: 4px; background: #707070; }
.sheetbar { height: 28px; flex: none; display: flex; align-items: flex-start; }
.arrows { width: 99px; height: 27px; display: flex; align-items: center; gap: 22px; padding-left: 21px; }
.stab { width: 69px; height: 28px; }
.stab span { flex: 1; border-right: 1px solid #ccc; line-height: 17px; }
.stab.on { width: 63px; height: 25px; padding-right: 4px; font-weight: 700; color: #222; background: linear-gradient(#fff, #fff) no-repeat 0 0 / 59px 25px; border-radius: 0 0 4px 4px; }
.stab.on span { border-right: 0; border-bottom: 2px solid #217346; flex: none; }
.plus { width: 85px; height: 27px; }
.push { margin: 9px 16px 0 auto; }
.hscroll { width: 384px; height: 14px; margin: 7px 16px 0 0; display: flex; align-items: center; justify-content: space-between; background: #f6f6f6; border-radius: 6px; padding: 0 2px; }
.hthumb { flex: 1; margin: 0 8px 0 4px; height: 8px; border-radius: 4px; background: #707070; }
.lf { border-left: 0; border-right: 6px solid #666; }
.rt { border-right: 0; border-left: 6px solid #666; }

.pane { position: relative; width: 310px; flex: none; display: flex; flex-direction: column; padding: 0 10px 12px 9px; }
.pane-head { height: 37px; display: flex; align-items: center; gap: 17px; padding: 2px 5px 0 0; }
.pane-head h2 { margin: 0 auto 0 1px; font-size: 12px; font-weight: 600; color: #333; }
.card { flex: 1; background: #fff; border: 1px solid #ddd; }
.who { position: relative; display: flex; align-items: flex-start; height: 45px; margin: 0 7px; border-bottom: 1px solid #e2e2e2; }
.logo { width: 27px; height: 20px; margin: 7px auto 0 8px; background: #0b6fc4; color: #eab01e; display: flex; align-items: center; justify-content: center; }
.who p { margin: 9px 7px 0 0; text-align: right; }
.who small { display: block; font-size: 10px; color: #555; }
.sx { width: 28px; height: 28px; border-radius: 50%; background: #e2e2e2; display: flex; align-items: center; justify-content: center; margin-top: 7px; font-weight: 600; color: #555; }
.fold { position: absolute; right: -8px; top: -1px; width: 17px; height: 40px; background: #fff; border: 1px solid #ddd; }
.form { padding: 6px 7px 0; display: flex; flex-direction: column; }
.field { display: flex; height: 29px; }
.field > svg { flex: none; margin: 7px 7px 0 1px; }
.field label { flex: 1; display: flex; align-items: center; border-bottom: 2px solid #b0b0b0; padding: 3px 12px 0 10px; }
.field label svg { color: #777; }
.field select, textarea { color: #3a3a3a; }
.note { height: 50px; margin-top: 16px; }
textarea { flex: 1; min-width: 0; resize: none; border: 1px solid #ddd; border-bottom: 2px solid #2f7fcb; border-radius: 3px; padding: 8px 9px 6px; line-height: 16px; }
.perm { display: flex; align-items: center; gap: 10px; height: 14px; margin-top: 8px; font-size: 10px; color: #555; }
.perm::before, .perm::after { content: ""; flex: 1; height: 1px; background: #e0e0e0; }
.perm + .field { margin-top: 6px; }
.export { height: 28px; margin-top: 10px; padding: 2px 0 0 6px; background: #0f69bd; color: #fff; border-radius: 3px; font-weight: 600; gap: 8px; }

.mark { position: absolute; border: 6px solid #f00; pointer-events: none; }
.area { left: 62px; top: 131px; width: 354px; height: 347px; border-radius: 60px; }
.m2, .m3, .m4 { left: 7px; right: 18px; }
.m2 { top: 73px; height: 118px; border-radius: 20px; }
.m3 { top: 193px; height: 62px; border-radius: 12px; }
.m4 { top: 262px; height: 62px; border-radius: 12px; border-color: #00ad4f; }
.badge { position: absolute; width: 41px; height: 41px; border-radius: 50%; background: #f00; color: #fff; display: flex; align-items: center; justify-content: center; font: 700 35px/41px "Open Sans", sans-serif; }
.b1 { left: 44px; top: 111px; }
.b2 { left: -12px; top: 21px; }
.b3 { left: -48px; top: 172px; }
.b4 { left: -69px; top: 262px; background: #00ad4f; }

.status { height: 5px; flex: none; background: #f6f6f6; display: flex; padding: 1px 159px 0 0; justify-content: flex-end; }
.view { width: 36px; display: flex; justify-content: center; padding-top: 2px; }
.view::before { content: ""; width: 13px; height: 2px; background: #555; }
.view.on { background: #ddd; }
</style>
